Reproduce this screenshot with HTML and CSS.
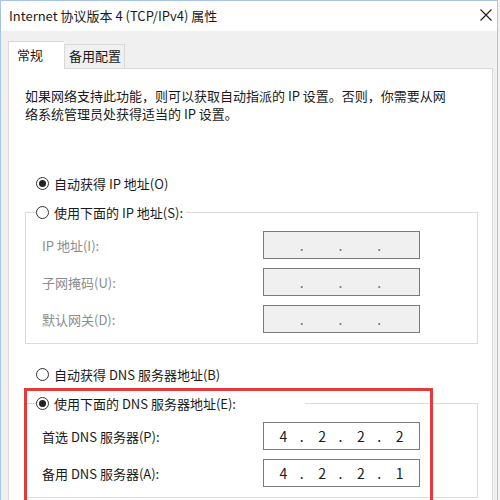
FILE: index.html
```html
<!DOCTYPE html>
<html lang="zh-CN">
<head>
    <meta charset="UTF-8">
    <title>Internet 协议版本 4 (TCP/IPv4) 属性</title>
    <link rel="stylesheet" href="styles.css">
</head>
<body>

    <div class="window">
        <div class="titlebar">
            <span class="title">Internet 协议版本 4 (TCP/IPv4) 属性</span>
            <svg class="close" width="12" height="12" viewBox="0 0 12 12">
                <path d="M0.5 0.5 L11.5 11.5 M11.5 0.5 L0.5 11.5" stroke="#222" stroke-width="1.2" fill="none"/>
            </svg>
        </div>

        <div class="content">
            <!-- Tabs -->
            <div class="tabs">
                <div class="tab active">常规</div>
                <div class="tab">备用配置</div>
            </div>

            <div class="panel">
                <p class="intro">如果网络支持此功能，则可以获取自动指派的 IP 设置。否则，你需要从网<br>络系统管理员处获得适当的 IP 设置。</p>

                <div class="option first">
                    <span class="radio checked"></span>
                    <span>自动获得 IP 地址(O)</span>
                </div>

                <!-- Static IP group (disabled) -->
                <div class="group">
                    <div class="option group-head">
                        <span class="radio"></span>
                        <span>使用下面的 IP 地址(S):</span>
                    </div>
                    <div class="field-row disabled">
                        <label>IP 地址(I):</label>
                        <div class="ip"><span></span><span></span><span></span><span></span></div>
                    </div>
                    <div class="field-row disabled">
                        <label>子网掩码(U):</label>
                        <div class="ip"><span></span><span></span><span></span><span></span></div>
                    </div>
                    <div class="field-row disabled">
                        <label>默认网关(D):</label>
                        <div class="ip"><span></span><span></span><span></span><span></span></div>
                    </div>
                </div>

                <div class="option second">
                    <span class="radio"></span>
                    <span>自动获得 DNS 服务器地址(B)</span>
                </div>

                <!-- DNS group -->
                <div class="group">
                    <div class="option group-head wide">
                        <span class="radio checked"></span>
                        <span>使用下面的 DNS 服务器地址(E):</span>
                    </div>
                    <div class="field-row">
                        <label>首选 DNS 服务器(P):</label>
                        <div class="ip"><span>4</span><span>2</span><span>2</span><span>2</span></div>
                    </div>
                    <div class="field-row">
                        <label>备用 DNS 服务器(A):</label>
                        <div class="ip"><span>4</span><span>2</span><span>2</span><span>1</span></div>
                    </div>
                </div>

                <!-- Red highlight -->
                <div class="highlight"></div>
            </div>
        </div>
    </div>

</body>
</html>
```

FILE: styles.css
```css
* {
    margin: 0;
    padding: 0;
    box-sizing: border-box;
}

body {
    width: 500px;
    height: 500px;
    overflow: hidden;
    background-color: #f2f2f2;
    font-family: "Noto Sans CJK SC", "Noto Sans", sans-serif;
    font-size: 13px;
    color: #1a1a1a;
}

.window {
    width: 498px;
    height: 500px;
    border: 1px solid #a9c4e6;
    border-bottom: none;
    background-color: #f0f0f0;
    overflow: hidden;
}

.titlebar {
    height: 30px;
    background-color: #fff;
    display: flex;
    align-items: center;
    justify-content: space-between;
    padding: 0 5px 0 8px;
}

.title {
    line-height: 18px;
}

.close {
    margin-top: -2px;
}

.content {
    padding: 10px 4px 0 7px;
}

.tabs {
    display: flex;
    align-items: flex-end;
    height: 27px;
}

.tab {
    height: 24px;
    width: 61px;
    padding-left: 4px;
    line-height: 22px;
    background-color: #f0f0f0;
    border: 1px solid #d9d9d9;
    border-bottom: none;
}

.tab.active {
    position: relative;
    z-index: 2;
    height: 28px;
    width: 56px;
    padding-left: 8px;
    margin-bottom: -1px;
    line-height: 25px;
    background-color: #fff;
    border-right: none;
}

.panel {
    position: relative;
    width: 485px;
    height: 460px;
    background-color: #fff;
    border: 1px solid #d9d9d9;
    padding: 18px 0 0 16px;
}

.intro {
    line-height: 18px;
}

.option {
    display: flex;
    align-items: center;
    gap: 5px;
    height: 18px;
    margin-left: 11px;
}

.option.first {
    margin-top: 51px;
}

.option.second {
    margin-top: 21px;
}

.radio {
    width: 13px;
    height: 13px;
    border: 1px solid #333;
    border-radius: 50%;
    background-color: #fff;
    display: flex;
    align-items: center;
    justify-content: center;
}

.radio.checked::after {
    content: "";
    width: 7px;
    height: 7px;
    border-radius: 50%;
    background-color: #222;
}

.group {
    width: 453px;
    border: 1px solid #dcdcdc;
    margin-top: 20px;
    padding-bottom: 10px;
}

.group-head {
    width: fit-content;
    margin: -10px 0 0 10px;
    padding-right: 3px;
    background-color: #fff;
}

.group-head.wide {
    width: 269px;
}

.field-row {
    display: flex;
    align-items: center;
    margin-top: 9px;
    padding-left: 16px;
}

.group-head + .field-row {
    margin-top: 10px;
}

.field-row label {
    width: 221px;
}

.field-row.disabled label {
    color: #8c8c8c;
}

.ip {
    width: 157px;
    height: 28px;
    border: 1px solid #7a7a7a;
    background-color: #fff;
    display: grid;
    grid-template-columns: repeat(4, 1fr);
    font-size: 14px;
    line-height: 26px;
}

.disabled .ip {
    background-color: #f0f0f0;
    color: #777;
}

.ip span {
    position: relative;
    text-align: center;
}

.ip span + span::before {
    content: ".";
    position: absolute;
    left: -3px;
}

.highlight {
    position: absolute;
    left: 15px;
    top: 319px;
    width: 409px;
    height: 200px;
    border: 3px solid #e23a3d;
}
```
